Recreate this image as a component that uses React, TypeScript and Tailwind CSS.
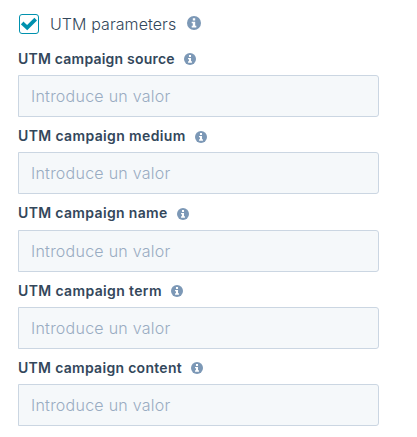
import { useState } from "react";

const fields = [
  { name: "source", tracking: "tracking-[0.21px]" },
  { name: "medium", tracking: "tracking-[0.36px]" },
  { name: "name", tracking: "tracking-[0.34px]" },
  { name: "term", tracking: "tracking-[0.36px]" },
  { name: "content", tracking: "tracking-[0.29px]" },
];

const InfoIcon = ({ className }: { className: string }) => (
  <svg viewBox="0 0 14 14" className={`shrink-0 ${className}`}>
    <circle cx="7" cy="7" r="7" fill="#7c98b6" />
    <path d="M5.8 2.3h2.4v2.3H5.8zM4.7 5.8h3.5v3.9h1.1v1.7H4.7V9.7h1.1V7.3H4.7z" fill="#fff" />
  </svg>
);

const App = () => {
  const [checked, setChecked] = useState(true);

  return (
    <div className="h-[437px] w-[417px] overflow-hidden bg-white pl-[18px] pt-[13px] font-['Inter','Liberation_Sans',sans-serif] text-[#33475b]">
      <div className="flex h-[22px] items-center">
        <button
          type="button"
          role="checkbox"
          aria-checked={checked}
          aria-label="UTM parameters"
          onClick={() => setChecked(!checked)}
          className="ml-px flex size-5 shrink-0 items-center justify-center rounded-[3px] border border-[#0091ae] bg-white"
        >
          {checked && (
            <svg viewBox="0 0 16 14" className="h-[14px] w-4 shrink-0">
              <path
                d="M2.6 7.3 6.2 10.7 13.4 3.5"
                fill="none"
                stroke="#0091ae"
                strokeWidth="3.8"
                strokeLinecap="square"
              />
            </svg>
          )}
        </button>
        <span className="ml-[11px] w-[137px] whitespace-nowrap text-[16px] font-light tracking-[0.08px]">
          UTM parameters
        </span>
        <InfoIcon className="-mt-0.5 size-[14px]" />
      </div>
      <div className="pt-[4.75px]">
        {fields.map(({ name, tracking }) => (
          <div key={name} className="h-[77.25px]">
            <label
              htmlFor={name}
              className={`flex h-[35.25px] items-center pt-[3px] text-[14px] font-semibold leading-5 ${tracking}`}
            >
              UTM campaign {name}
              <InfoIcon className="ml-[9px] mt-px size-3" />
            </label>
            <input
              id={name}
              type="text"
              placeholder="Introduce un valor"
              className="block h-[42px] w-[361px] rounded-r-[3px] border border-[#cbd6e2] bg-[#f5f8fa] px-3 text-[16px] font-light tracking-[0.25px] outline-none placeholder:text-[#99acc2]"
            />
          </div>
        ))}
      </div>
    </div>
  );
};

export default App;
